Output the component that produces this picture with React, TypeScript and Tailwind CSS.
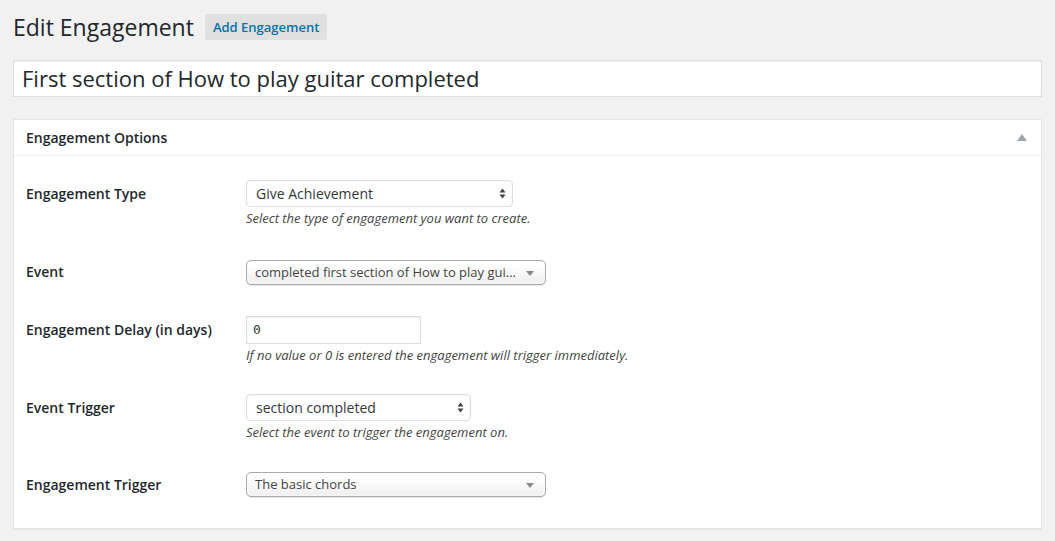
import React from 'react';

const font = {fontFamily: '"Open Sans", "Noto Sans", sans-serif'};

const UpDown = () => (
  <svg width="7" height="11" viewBox="0 0 7 11" className="text-[#444]">
    <path d="M0.5 4.5 L3.5 0.5 L6.5 4.5 Z" fill="currentColor" />
    <path d="M0.5 6.5 L3.5 10.5 L6.5 6.5 Z" fill="currentColor" />
  </svg>
);

const Caret = () => (
  <svg width="8" height="5" viewBox="0 0 8 5">
    <path d="M0 0 L8 0 L4 5 Z" fill="#888" />
  </svg>
);

const NativeSelect = ({value, width}: {value: string; width: string}) => (
  <div
    className={`flex h-[27px] ${width} items-center justify-between rounded-[4px] border border-[#ddd] bg-white pl-[9px] pr-[6px] text-[14px] text-[#32373c] shadow-[inset_0_1px_2px_rgba(0,0,0,0.04)]`}
  >
    <span>{value}</span>
    <UpDown />
  </div>
);

const ChosenSelect = ({value}: {value: string}) => (
  <div className="flex h-[25px] w-[300px] items-center justify-between rounded-[5px] border border-[#aaa] bg-gradient-to-b from-white from-20% to-[#eee] pl-[8px] pr-[11px] pt-[1px] text-[13px] text-[#444] shadow-[0_0_3px_white_inset,0_1px_1px_rgba(0,0,0,0.1)]">
    <span className="truncate">{value}</span>
    <Caret />
  </div>
);

const Description = ({children}: {children: React.ReactNode}) => (
  <p className="mt-[2px] text-[13px] leading-[18px] italic text-[#444]">{children}</p>
);

const Row = ({
  label,
  h,
  children,
  className = '',
}: {
  label: string;
  h: string;
  children: React.ReactNode;
  className?: string;
}) => (
  <div className={`flex items-start ${className}`}>
    <div className={`w-[220px] shrink-0 text-[14px] font-semibold text-[#23282d] ${h}`}>{label}</div>
    <div className="flex flex-col">{children}</div>
  </div>
);

export default function App() {
  return (
    <div className="min-h-[541px] bg-[#f1f1f1] px-[13px] pt-[9px]" style={font}>
      <div className="flex items-center">
        <h1 className="text-[23px] leading-[36px] text-[#23282d]">Edit Engagement</h1>
        <span className="ml-[11px] rounded-[2px] bg-[#e0e0e0] px-[8px] py-[4px] text-[13px] font-semibold leading-[18px] text-[#0073aa]">
          Add Engagement
        </span>
      </div>

      <div className="mt-[15px] flex h-[37px] items-center border border-[#ddd] bg-white px-[8px] text-[22px] text-[#23282d] shadow-[inset_0_1px_2px_rgba(0,0,0,0.07)]">
        First section of How to play guitar completed
      </div>

      <div className="mt-[22px] border border-[#e5e5e5] bg-white shadow-[0_1px_1px_rgba(0,0,0,0.04)]">
        <div className="flex h-[36px] items-center justify-between border-b border-[#eee] pl-[12px] pr-[14px]">
          <span className="text-[14px] font-semibold text-[#23282d]">Engagement Options</span>
          <svg width="10" height="7" viewBox="0 0 10 7">
            <path d="M0 7 L5 0 L10 7 Z" fill="#a0a5aa" />
          </svg>
        </div>

        <div className="flex flex-col pl-[12px] pb-[30px] pt-[24px]">
          <Row label="Engagement Type" h="leading-[27px]">
            <NativeSelect value="Give Achievement" width="w-[267px]" />
            <Description>Select the type of engagement you want to create.</Description>
          </Row>

          <Row label="Event" h="leading-[24px]" className="mt-[33px]">
            <ChosenSelect value="completed first section of How to play gui..." />
          </Row>

          <Row label="Engagement Delay (in days)" h="leading-[28px]" className="mt-[31px]">
            <div className="flex h-[28px] w-[175px] items-center border border-[#ddd] bg-white px-[6px] text-[13px] text-[#32373c] shadow-[inset_0_1px_2px_rgba(0,0,0,0.07)]" style={{fontFamily: '"DejaVu Sans Mono", monospace'}}>
              0
            </div>
            <Description>If no value or 0 is entered the engagement will trigger immediately.</Description>
          </Row>

          <Row label="Event Trigger" h="leading-[27px]" className="mt-[30px]">
            <NativeSelect value="section completed" width="w-[225px]" />
            <Description>Select the event to trigger the engagement on.</Description>
          </Row>

          <Row label="Engagement Trigger" h="leading-[26px]" className="mt-[31px]">
            <ChosenSelect value="The basic chords" />
          </Row>
        </div>
      </div>
    </div>
  );
}
